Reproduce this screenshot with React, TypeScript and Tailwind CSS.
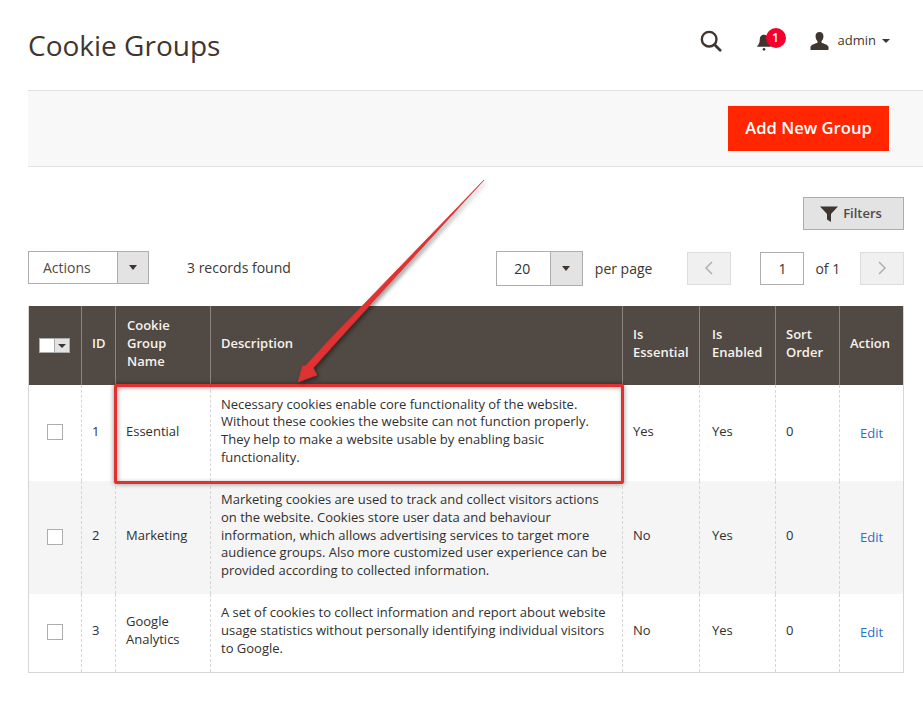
import React from "react";

const rows = [
  { id: 1, name: "Essential", h: "h-[96px]", bg: "bg-white", essential: "Yes", nudge: "!pb-[2px]", edit: "!pt-[2px]", desc: "Necessary cookies enable core functionality of the website. Without these cookies the website can not function properly. They help to make a website usable by enabling basic functionality." },
  { id: 2, name: "Marketing", h: "h-[113px]", bg: "bg-[#f5f5f5]", essential: "No", nudge: "", edit: "", desc: "Marketing cookies are used to track and collect visitors actions on the website. Cookies store user data and behaviour information, which allows advertising services to target more audience groups. Also more customized user experience can be provided according to collected information." },
  { id: 3, name: "Google Analytics", h: "h-[78px]", bg: "bg-white", essential: "No", nudge: "", edit: "", desc: "A set of cookies to collect information and report about website usage statistics without personally identifying individual visitors to Google." },
];

const Caret = ({ className = "" }: { className?: string }) => (
  <span className={"inline-block w-0 h-0 border-l-[5px] border-r-[5px] border-t-[6px] border-l-transparent border-r-transparent border-t-[#41362f] " + className} />
);

const th = "border-l border-[#8a837f] first:border-l-0 px-[10px] pb-[5px] text-left align-middle font-semibold text-[13px] leading-[18px] text-[#f7f3eb]";
const td = "border-l border-dashed border-[#d6d6d6] first:border-l-0 px-[10px] pb-[4px] align-middle text-[13px] leading-[17.75px] text-[#303030]";

export default function App() {
  return (
    <div className="relative w-[923px] h-[715px] overflow-hidden bg-white font-['Open_Sans',sans-serif] text-[#41362f]">
      <header className="flex items-center justify-between pl-[28px] pr-[33px] h-[90px]">
        <h1 className="text-[28px] leading-[36px] font-normal text-[#41362f]">Cookie Groups</h1>
        <div className="flex items-center -mt-[8px]">
          <svg width="22" height="22" viewBox="0 0 24 24" fill="none" className="mr-[34px]">
            <circle cx="10" cy="10" r="8" stroke="#41362f" strokeWidth="2.600" />
            <path d="M16 16l6 6" stroke="#41362f" strokeWidth="3" strokeLinecap="round" />
          </svg>
          <div className="relative w-[20px] h-[20px] mr-[34px]">
            <svg width="16" height="17" viewBox="0 0 18 20" className="mt-[3px]">
              <path d="M9 1c-3.200 0-5 2.400-5 5.400 0 3.600-1 5.600-3 7.600v1h16v-1c-2-2-3-4-3-7.600C14 3.400 12.200 1 9 1z" fill="#41362f" />
              <circle cx="9" cy="18" r="1.600" fill="#41362f" />
            </svg>
            <span className="absolute left-[10px] -top-[3px] w-[20px] h-[20px] rounded-full bg-[#f5002d] text-white text-[12px] font-semibold leading-[20px] text-center">1</span>
          </div>
          <svg width="19" height="18" viewBox="0 0 20 20" className="mr-[9px]">
            <path d="M10 0c-3 0-4.400 2-4.400 4.800 0 2.400 1 4.400 2.200 5.400v1.400C6 13 1 13.400 0 16.500V20h20v-3.500c-1-3.100-6-3.500-7.800-4.900v-1.400c1.200-1 2.200-3 2.200-5.400C14.400 2 13 0 10 0z" fill="#41362f" />
          </svg>
          <span className="text-[13px] leading-[20px] text-[#41362f] mr-[6px] -mt-[2px]">admin</span>
          <Caret className="!border-l-[4px] !border-r-[4px] !border-t-[4px]" />
        </div>
      </header>

      <div className="ml-[28px] h-[77px] bg-[#f8f8f8] border-y border-[#e3e3e3] flex items-center justify-end pr-[34px]">
        <button className="w-[161px] h-[45px] bg-[#ff2600] text-white text-[16.600px] font-semibold -mt-[1px]">Add New Group</button>
      </div>

      <div className="ml-[28px] mr-[19px]">
        <div className="flex justify-end mt-[30px]">
          <button className="w-[101px] h-[33px] pr-[5px] bg-[#e3e3e3] border border-[#adadad] flex items-center justify-center gap-[5px] text-[13px] font-semibold text-[#514943]">
            <svg width="18" height="16" viewBox="0 0 18 16"><path d="M0 0.500h18L11 8v8l-4-2.500V8z" fill="#41362f" /></svg>
            Filters
          </button>
        </div>

        <div className="flex items-center mt-[20px] h-[36px]">
          <div className="flex w-[121px] h-[33px] border border-[#adadad] -mt-[2px]">
            <span className="flex-1 pl-[14px] text-[14px] leading-[31px] text-[#514943]">Actions</span>
            <span className="w-[31px] bg-[#e3e3e3] border-l border-[#adadad] flex items-center justify-center"><Caret className="!border-l-[4px] !border-r-[4px] !border-t-[5px]" /></span>
          </div>
          <span className="ml-[38px] text-[14px] -mt-[2px] text-[#41362f]">3 records found</span>
          <div className="flex w-[87px] h-[35px] border border-[#adadad] ml-[205px]">
            <span className="flex-1 text-center pr-[2px] text-[14px] leading-[33px] text-[#303030]">20</span>
            <span className="w-[32px] bg-[#e3e3e3] border-l border-[#adadad] flex items-center justify-center"><Caret className="!border-l-[4px] !border-r-[4px] !border-t-[5px]" /></span>
          </div>
          <span className="ml-[12px] text-[14px] text-[#41362f]">per page</span>
          <div className="ml-[35px] w-[44px] h-[33px] bg-[#f0f0f0] border border-[#dcdcdc] flex items-center justify-center">
            <svg width="10" height="16" viewBox="0 0 10 16" fill="none"><path d="M8 2L2 8l6 6" stroke="#b0b0b0" strokeWidth="1.500" /></svg>
          </div>
          <div className="ml-[29px] w-[44px] h-[33px] border border-[#adadad] text-center text-[14px] leading-[31px] text-[#303030]">1</div>
          <span className="ml-[11px] text-[14px] text-[#41362f]">of 1</span>
          <div className="ml-auto w-[44px] h-[33px] bg-[#f0f0f0] border border-[#dcdcdc] flex items-center justify-center">
            <svg width="10" height="16" viewBox="0 0 10 16" fill="none"><path d="M2 2l6 6-6 6" stroke="#b0b0b0" strokeWidth="1.500" /></svg>
          </div>
        </div>

        <table className="mt-[20px] w-[875px] table-fixed border-collapse border-b border-x border-[#d6d6d6]">
          <colgroup>
            <col className="w-[53px]" />
            <col className="w-[34px]" />
            <col className="w-[95px]" />
            <col className="w-[412px]" />
            <col className="w-[77px]" />
            <col className="w-[76px]" />
            <col className="w-[64px]" />
            <col className="w-[64px]" />
          </colgroup>
          <thead>
            <tr className="h-[79px] bg-[#514943]">
              <th className={th + " !px-0 !pb-0"}>
                <div className="flex justify-center pr-[2px]">
                  <div className="flex w-[31px] h-[15px] border border-[#adadad] bg-white">
                    <span className="flex-1" />
                    <span className="w-[15px] bg-[#e3e3e3] border-l border-[#adadad] flex items-center justify-center"><Caret className="!border-l-[4px] !border-r-[4px] !border-t-[4px]" /></span>
                  </div>
                </div>
              </th>
              <th className={th}>ID</th>
              <th className={th + " !pl-[11px]"}>Cookie Group Name</th>
              <th className={th}>Description</th>
              <th className={th}>Is Essential</th>
              <th className={th + " !pl-[12px] !pr-0"}>Is Enabled</th>
              <th className={th}>Sort Order</th>
              <th className={th}>Action</th>
            </tr>
          </thead>
          <tbody>
            {rows.map((r) => (
              <tr key={r.id} className={r.h + " " + r.bg}>
                <td className={td + " !px-0 !pb-[2px]"}>
                  <div className="flex justify-center"><div className="w-[16px] h-[16px] bg-white border border-[#adadad]" /></div>
                </td>
                <td className={td + " " + r.nudge}>{r.id}</td>
                <td className={td + " " + r.nudge}>{r.name}</td>
                <td className={td}>{r.desc}</td>
                <td className={td + " " + r.nudge}>{r.essential}</td>
                <td className={td + " !pl-[12px] " + r.nudge}>Yes</td>
                <td className={td + " " + r.nudge}>0</td>
                <td className={td + " text-center !pb-0 !pr-[10px] " + r.edit}><a className="text-[#2a6fc9]">Edit</a></td>
              </tr>
            ))}
          </tbody>
        </table>
      </div>

      {/* annotation: highlight box */}
      <div className="absolute left-[114px] top-[384px] w-[510px] h-[100px] border-[3px] border-[#e03131] rounded-[2px] shadow-[0_0_5px_rgba(0,0,0,0.45),inset_1px_1px_4px_rgba(0,0,0,0.35)] pointer-events-none" />
      {/* annotation: arrow */}
      <svg className="absolute left-[280px] top-[170px] pointer-events-none" width="220" height="220" viewBox="0 0 220 220">
        <defs>
          <filter id="s" x="-20%" y="-20%" width="140%" height="140%">
            <feDropShadow dx="2" dy="2" stdDeviation="2" floodColor="#000" floodOpacity="0.45" />
          </filter>
        </defs>
        <path d="M204 10 L58 170 L33 198 L36.700 205 L18.300 211.700 L22.700 196 L25.500 196 L49.300 170 Z" fill="#e03131" stroke="#e03131" strokeWidth="0.700" strokeLinejoin="round" filter="url(#s)" />
      </svg>
    </div>
  );
}
